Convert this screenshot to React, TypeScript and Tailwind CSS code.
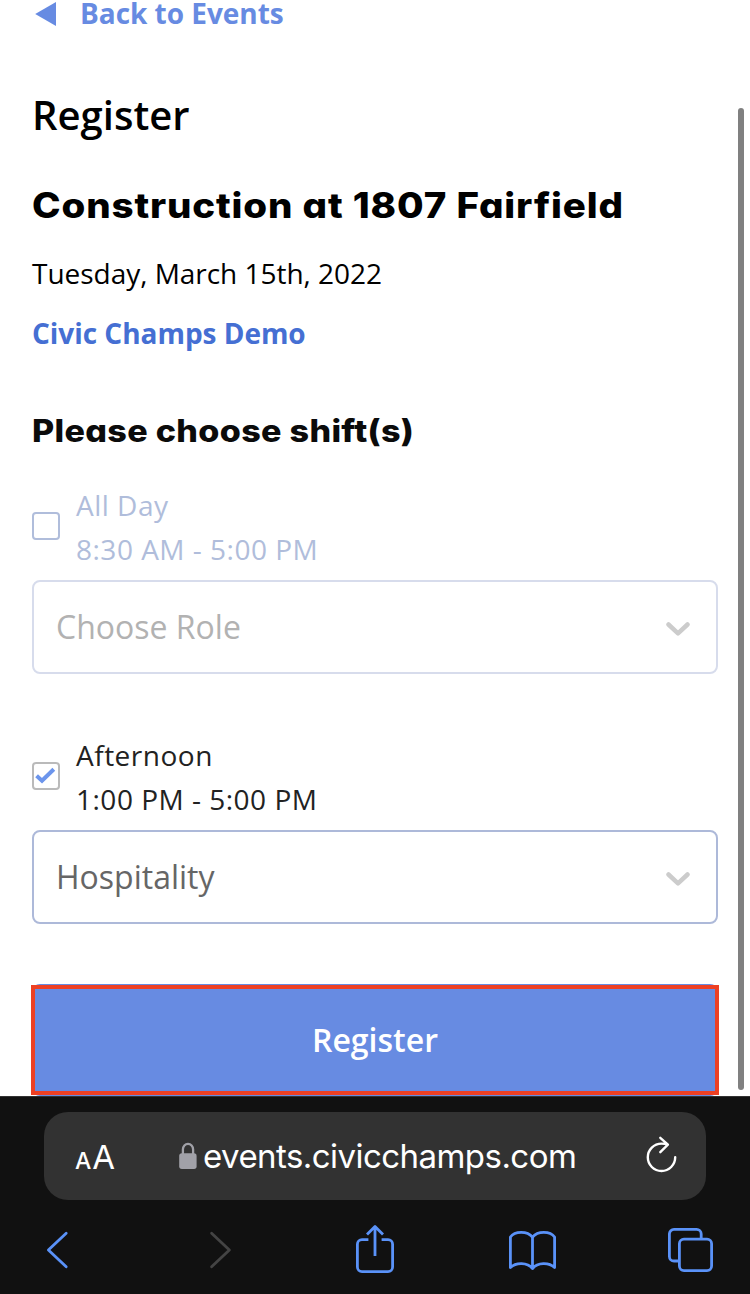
import { useState } from "react";
import clsx from "clsx";

interface Shift {
  id: string;
  name: string;
  time: string;
  role: string | null;
}

const shifts: Shift[] = [
  { id: "all-day", name: "All Day", time: "8:30 AM - 5:00 PM", role: null },
  { id: "afternoon", name: "Afternoon", time: "1:00 PM - 5:00 PM", role: "Hospitality" },
];

const headingFont =
  "origin-left scale-x-110 whitespace-nowrap font-['Inter',sans-serif] [font-feature-settings:'cv11'] font-extrabold";

interface ShiftRowProps {
  shift: Shift;
  checked: boolean;
  onToggle: () => void;
}

const ShiftRow = ({ shift, checked, onToggle }: ShiftRowProps) => (
  <div className="h-[191px]">
    <div className="flex h-[88px] items-start gap-4">
      <button
        onClick={onToggle}
        className={clsx(
          "mt-[29px] size-7 shrink-0 rounded-[4px] border-2",
          checked ? "border-[#bababa]" : "border-[#b0bddb]"
        )}
      >
        {checked && (
          <svg viewBox="0 0 24 24" className="size-6 fill-none stroke-[#6c95ec] stroke-[4]">
            <path d="M2.6 11.8 8 16.8 19.8 5.2" />
          </svg>
        )}
      </button>
      <div
        className={clsx(
          "text-[28px] leading-[44px] tracking-[0.5px]",
          checked ? "text-[#222]" : "text-[#b0bddb]"
        )}
      >
        <div>{shift.name}</div>
        <div>{shift.time}</div>
      </div>
    </div>
    <div
      className={clsx(
        "mt-[9px] flex h-[94px] items-center justify-between rounded-lg border-2 pr-[26px] pl-[22px]",
        checked ? "border-[#adb9d9]" : "border-[#d7dcec]"
      )}
    >
      <span className={clsx("text-[32px] leading-[44px]", shift.role ? "text-[#666]" : "text-[#b2b2b2]")}>
        {shift.role ?? "Choose Role"}
      </span>
      <svg viewBox="0 0 24 16" className="mt-1 h-4 w-6 fill-none stroke-[#ccc] stroke-[4.5]" strokeLinecap="round" strokeLinejoin="round">
        <path d="M2.5 3.5 12 12.3 21.5 3.5" />
      </svg>
    </div>
  </div>
);

const BrowserBar = () => (
  <footer className="h-[198px] border-t border-[#333] bg-[#111] px-11 pt-[15px] font-['Inter',sans-serif]">
    <div className="flex h-[88px] items-center rounded-[24px] bg-[#323232] pr-[29px] pl-[31px] text-white">
      <div className="flex w-[104px] items-baseline gap-px pt-[5px]">
        <span className="text-[23px] leading-10 font-medium">A</span>
        <span className="text-[33px] leading-10">A</span>
      </div>
      <svg viewBox="0 0 18 28" className="mr-[6px] h-7 w-[18px] shrink-0">
        <path d="M3.9 12.5V7.5a5.1 5.6 0 0 1 10.2 0v5" fill="none" stroke="#a1a1a8" strokeWidth="2.3" />
        <rect x="0.2" y="11.3" width="17.4" height="15.6" rx="2.6" fill="#a1a1a8" />
      </svg>
      <span className="text-[33px] leading-10 tracking-[-0.55px]">events.civicchamps.com</span>
      <svg viewBox="0 0 34 40" className="ml-auto h-10 w-[34px] shrink-0 fill-none stroke-white stroke-[2.4]" strokeLinecap="round" strokeLinejoin="round">
        <path d="M32.2 21.3A13.7 13.7 0 1 1 18.5 7.6q3.5 0 6.3 1M17.3 1.8l7.6 6.9-7.6 7.5" />
      </svg>
    </div>
    <nav className="-mx-11 flex pt-5 pl-[46px] [&>svg]:h-14 [&>svg]:shrink-0 [&>svg]:fill-none [&>svg]:stroke-[#5a92f8] [&>svg]:stroke-[2.8]">
      <svg viewBox="0 0 24 56" width="24" strokeLinecap="round" strokeLinejoin="round">
        <path d="M20.2 13.2 2.4 30l17.8 16.8" />
      </svg>
      <svg viewBox="0 0 24 56" width="24" className="ml-[138px] !stroke-[#444]" strokeLinecap="round" strokeLinejoin="round">
        <path d="M3.6 13.2 21.4 30 3.6 46.8" />
      </svg>
      <svg viewBox="0 0 40 56" width="40" className="ml-[123px]" strokeLinejoin="round">
        <path d="M13.4 19.6H7a4.6 4.6 0 0 0-4.6 4.6v22.9a4.6 4.6 0 0 0 4.6 4.6h26a4.6 4.6 0 0 0 4.6-4.6V24.2a4.6 4.6 0 0 0-4.6-4.6h-6.4" />
        <path d="M20 36V6.8M12 14.6l8-8 8 8" />
      </svg>
      <svg viewBox="0 0 50 56" width="50" className="ml-[113px]" strokeLinecap="round" strokeLinejoin="round">
        <path d="M2.4 47.6V17c4.5-6.2 17-6.2 22.1.2 5.1-6.4 17.6-6.4 22.1-.2v30.6c-5.5-5.4-17-5.4-22.1.9-5.1-6.3-16.6-6.3-22.1-.9ZM24.5 17.2v31.3" />
      </svg>
      <svg viewBox="0 0 48 56" width="48" className="ml-[109px]" strokeLinejoin="round">
        <path d="M12 41H7a4.6 4.6 0 0 1-4.6-4.6V14A4.6 4.6 0 0 1 7 9.4h22.6a4.6 4.6 0 0 1 4.6 4.6v5" />
        <rect x="12.4" y="19.1" width="32.2" height="31.6" rx="4.6" />
      </svg>
    </nav>
  </footer>
);

const App = () => {
  const [selected, setSelected] = useState<string[]>(["afternoon"]);

  const toggle = (id: string) =>
    setSelected((prev) => (prev.includes(id) ? prev.filter((s) => s !== id) : [...prev, id]));

  return (
    <div className="h-[1294px] w-[750px] overflow-hidden bg-white font-['Open_Sans',sans-serif]">
      <main className="relative h-[1096px] px-8">
        <a className="flex items-center text-[28px] leading-[26px] font-bold tracking-[-0.03px] whitespace-nowrap text-[#678be2]">
          <svg viewBox="0 0 24 26" className="mr-6 h-[26px] w-6 fill-current">
            <path d="M3.2 14 24 2v24Z" />
          </svg>
          Back to Events
        </a>

        <h1 className="mt-[62px] text-[40px] leading-[54px] font-semibold">Register</h1>
        <h2 className={clsx(headingFont, "mt-[39px] text-[35px] leading-[48px] tracking-[0.77px]")}>
          Construction at 1807 Fairfield
        </h2>
        <p className="mt-6 text-[28px] leading-10 tracking-[-0.03px]">Tuesday, March 15th, 2022</p>
        <p className="mt-5 text-[28px] leading-10 font-bold tracking-[-0.03px] text-[#456fd3]">Civic Champs Demo</p>

        <h3 className={clsx(headingFont, "mt-14 text-[31px] leading-[44px] tracking-[0.28px] text-[#0b0b0b]")}>
          Please choose shift(s)
        </h3>
        <div className="mt-[30px] flex flex-col gap-[59px]">
          {shifts.map((shift) => (
            <ShiftRow
              key={shift.id}
              shift={shift}
              checked={selected.includes(shift.id)}
              onToggle={() => toggle(shift.id)}
            />
          ))}
        </div>

        <button className="relative mt-[60px] flex h-28 w-full items-center justify-center rounded-lg bg-[#678be2] text-[32px] font-semibold text-white">
          Register
          <span className="absolute -inset-x-px inset-y-px border-4 border-[#ed4024]" />
        </button>

        {/* Scroll indicator */}
        <div className="absolute top-[108px] right-[6px] h-[982px] w-[6px] rounded-full bg-[#808080]" />
      </main>
      <BrowserBar />
    </div>
  );
};

export default App;
